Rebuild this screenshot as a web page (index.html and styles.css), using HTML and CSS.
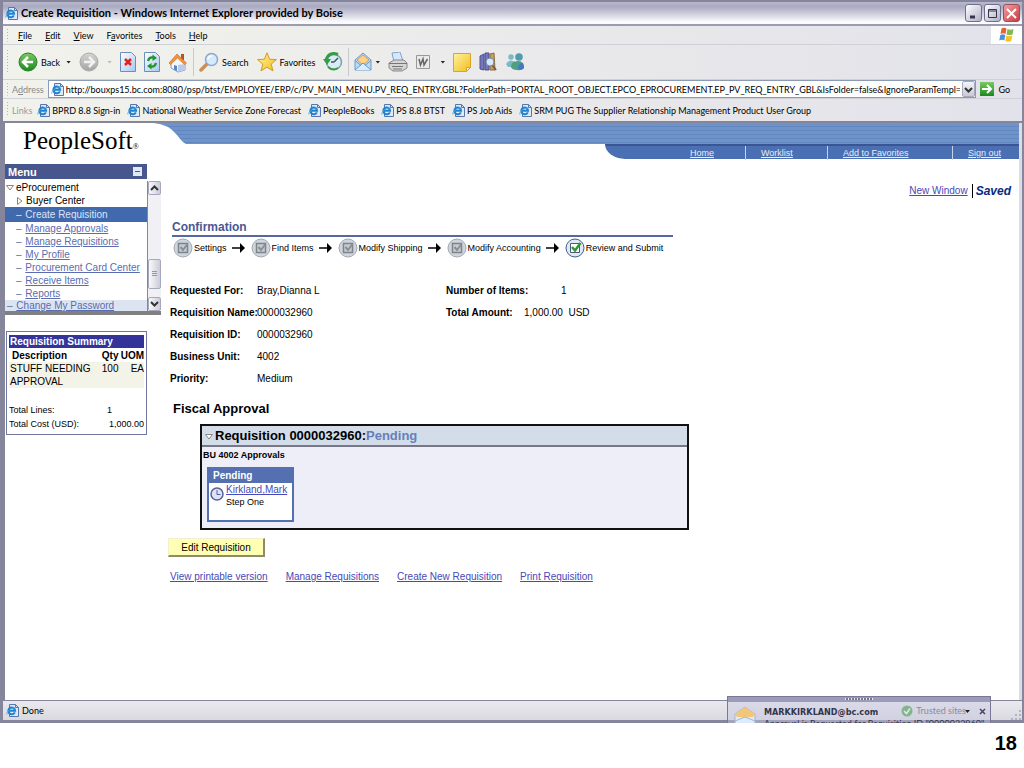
FILE: index.html
```html
<!DOCTYPE html>
<html lang="en">
<head>
  <meta charset="utf-8">
  <title>Create Requisition</title>
  <link rel="stylesheet" href="styles.css">
</head>
<body>

  <!-- shared icons -->
  <svg class="defs" width="0" height="0" aria-hidden="true">
    <linearGradient id="g-green" x1="0" y1="0" x2="0" y2="1"><stop offset="0" stop-color="#7cc963"/><stop offset="1" stop-color="#198a1c"/></linearGradient>
    <linearGradient id="g-gray" x1="0" y1="0" x2="0" y2="1"><stop offset="0" stop-color="#d4d4d4"/><stop offset="1" stop-color="#a4a4a4"/></linearGradient>
    <linearGradient id="g-page" x1="0" y1="0" x2="1" y2="1"><stop offset="0" stop-color="#fff"/><stop offset="1" stop-color="#a8c6f2"/></linearGradient>
    <linearGradient id="g-gold" x1="0" y1="0" x2="1" y2="1"><stop offset="0" stop-color="#fff3a0"/><stop offset="1" stop-color="#f2bd1c"/></linearGradient>
    <symbol id="ie" viewBox="0 0 13 13">
      <path d="M3.500 .5h6l3 3v9h-9z" fill="#dfe9f8" stroke="#5877ad"/>
      <path d="M9.500 .5v3h3" fill="none" stroke="#5877ad"/>
      <path d="M8.800 8.300a3.400 3.400 0 1 1 .3-1.500H2.800" fill="none" stroke="#1f82cf" stroke-width="2"/>
      <path d="M1 10.500C-.5 8.500 6 3 9.500 4" fill="none" stroke="#4aa7e4" stroke-width=".9"/>
    </symbol>
    <symbol id="step" viewBox="0 0 20 20">
      <circle cx="10" cy="10" r="9" fill="#cfd5dc" stroke="#a3a9b1"/>
      <path d="M5.500 5.500h9v9h-9z" fill="#c9cccf" stroke="#7e848b" stroke-width="1.500"/>
      <path d="M7.500 9l2.500 3 4.500-6" fill="none" stroke="#898f96" stroke-width="2"/>
    </symbol>
    <symbol id="arrow" viewBox="0 0 14 10">
      <path d="M0 5h8" stroke="#000" stroke-width="1.500"/>
      <path d="M8 0l5 5-5 5z"/>
    </symbol>
  </svg>

  <div class="window">
    <header class="titlebar">
      <svg class="ie" width="13" height="13"><use href="#ie"/></svg>
      <h1>Create Requisition - Windows Internet Explorer provided by Boise</h1>
      <div class="winbuttons">
        <button class="winbtn" aria-label="Minimize"><svg width="15" height="15"><path d="M4 11h5" stroke="#33354d" stroke-width="3"/></svg></button>
        <button class="winbtn" aria-label="Maximize"><svg width="15" height="15"><path d="M3.500 3.500h8v8h-8zM3 5h9" fill="none" stroke="#33354d"/></svg></button>
        <button class="winbtn close" aria-label="Close"><svg width="15" height="15"><path d="M3 3l9 9M12 3l-9 9" stroke="#fff" stroke-width="2"/></svg></button>
      </div>
    </header>

    <div class="menubar bar">
      <button><u>F</u>ile</button>
      <button><u>E</u>dit</button>
      <button><u>V</u>iew</button>
      <button>F<u>a</u>vorites</button>
      <button><u>T</u>ools</button>
      <button><u>H</u>elp</button>
      <div class="flag">
        <svg width="18" height="16" viewBox="0 0 18 16">
          <path d="M3.500 1.500Q6 0 8.500 1.500L7.500 7Q5 5.500 2.500 7z" fill="#ea6035"/>
          <path d="M9.500 2Q12 3.500 15.500 2L14.500 7.500Q11 9 8.500 7.500z" fill="#86b84a"/>
          <path d="M2.300 8Q5 6.500 7.300 8L6.300 13.500Q4 12 1.300 13.500z" fill="#4c8fdb"/>
          <path d="M8.300 8.500Q11 10 14.300 8.500L13.300 14Q10 15.500 7.300 14z" fill="#f6c12e"/>
        </svg>
      </div>
    </div>

    <div class="toolbar bar">
      <button class="back">
        <svg width="20" height="20"><circle cx="10" cy="10" r="9" fill="url(#g-green)" stroke="#2b7f2a"/><path d="M10 5l-5 5 5 5M5.500 10H15" fill="none" stroke="#fff" stroke-width="2.500"/></svg>
        Back <span class="drop"></span>
      </button>
      <button class="forward" aria-label="Forward">
        <svg width="20" height="20"><circle cx="10" cy="10" r="9" fill="url(#g-gray)" stroke="#aaa"/><path d="M10 5l5 5-5 5M14.500 10H5" fill="none" stroke="#f1f1f1" stroke-width="2.500"/></svg>
        <span class="drop faint"></span>
      </button>
      <button aria-label="Stop">
        <svg width="16" height="20"><path d="M.5 .5h11l4 4v15H.5z" fill="url(#g-page)" stroke="#6d8dc0"/><path d="M5 7l6 6M11 7l-6 6" stroke="#e2231a" stroke-width="2.500"/></svg>
      </button>
      <button aria-label="Refresh">
        <svg width="16" height="20"><path d="M.5 .5h11l4 4v15H.5z" fill="url(#g-page)" stroke="#6d8dc0"/><path d="M4 9q1-4 5-3.500M12 11q-1 4-5 3.500" fill="none" stroke="#22962b" stroke-width="2.300"/><path d="M8.500 2.500L13 6l-4.500 3zM7.500 17.500L3 14l4.500-3z" fill="#22962b"/></svg>
      </button>
      <button aria-label="Home">
        <svg width="20" height="21"><path d="M13 2h3v6h-3z" fill="#b5522c"/><path d="M3 10l6-6 8 8v6l-7 2-7-4z" fill="#f3f6fb" stroke="#8b9ab8"/><path d="M10 13l7-1v6l-7 2z" fill="#b8cbe8"/><path d="M9 2L1 11l1.500 1.500L9.500 6l7 6.500 2-1.500z" fill="#f0953b" stroke="#c76920" stroke-width=".6"/><path d="M6 13l3 1v5l-3-1.500z" fill="#5785c5"/></svg>
      </button>
      <span class="sep"></span>
      <button class="search">
        <svg width="20" height="20"><path d="M2 18l7-7" stroke="#c98f55" stroke-width="3.500" stroke-linecap="round"/><circle cx="12.500" cy="7.500" r="6" fill="#d5eafa" stroke="#8ba9cf" stroke-width="1.500"/><path d="M9 7q1-3 4-3" fill="none" stroke="#fff" stroke-width="1.500"/></svg>
        Search
      </button>
      <button class="favs">
        <svg width="20" height="20"><path d="M10 .8l2.600 6.400 6.800.4-5.200 4.500 1.800 6.800L10 15.200 4 18.900l1.800-6.800L.6 7.600l6.800-.4z" fill="url(#g-gold)" stroke="#d29a25"/></svg>
        Favorites
      </button>
      <button aria-label="History">
        <svg width="20" height="20"><circle cx="11" cy="10" r="7.500" fill="#d8ecf6" stroke="#7da2a9" stroke-width="1.500"/><path d="M11 10l4-4M11 10h-3" stroke="#42545c" stroke-width="1.500"/><path d="M15 2.500Q6-1 3 8" fill="none" stroke="#349d43" stroke-width="3"/><path d="M0 7h8l-4 6z" fill="#349d43"/><path d="M5 15q5 4.500 10 1" fill="none" stroke="#349d43" stroke-width="2"/></svg>
      </button>
      <span class="sep"></span>
      <button class="mail" aria-label="Mail">
        <svg width="18" height="20"><path d="M1 8l8-7 8 7v10H1z" fill="#b9dbf7" stroke="#6c9ac9"/><path d="M3 8l6-5 6 5-6 5z" fill="#fbd38b" stroke="#db9d49"/><path d="M1 18l8-7 8 7M1 8.500l6 5M17 8.500l-6 5" fill="#d9edfc" stroke="#6c9ac9"/></svg>
        <span class="drop"></span>
      </button>
      <button aria-label="Print">
        <svg width="20" height="20"><path d="M4 1l8-1 3 9-9 1z" fill="#d6e8fb" stroke="#7fa4cf"/><path d="M1 11l5-3h10l3 3v5l-5 3H5l-4-3z" fill="#d5d5d8" stroke="#888"/><path d="M1 11.500h18M4 14.500h11M5 17h9" stroke="#777"/></svg>
      </button>
      <button class="word" aria-label="Edit with Word">
        <svg width="14" height="14"><path d="M.5 .5h13v13H.5z" fill="#e9e9e9" stroke="#999"/><path d="M3 4l1.500 6L7 4l1 6 3.500-6" fill="none" stroke="#666" stroke-width="1.500"/></svg>
        <span class="drop"></span>
      </button>
      <button aria-label="Notes">
        <svg width="18" height="19"><path d="M.5 .5h17v14l-4 4H.5z" fill="url(#g-gold)" stroke="#d9a62b"/><path d="M17.500 14.500h-4v4z" fill="#fff3b0" stroke="#d9a62b"/></svg>
      </button>
      <button aria-label="Research">
        <svg width="18" height="20"><path d="M1 4l4-2v16l-4-1zM6 1h4v17H6z" fill="#7577b8" stroke="#4d4f91"/><path d="M11 2l4-1 1 17h-5z" fill="#c8a05f" stroke="#8c6b38"/><path d="M13 13l4 5" stroke="#7a5b39" stroke-width="2"/><circle cx="11" cy="10" r="4" fill="#d5e9f7" stroke="#6f8cb1"/></svg>
      </button>
      <button aria-label="Messenger">
        <svg width="20" height="20"><circle cx="6" cy="5" r="2.800" fill="#79bbc4"/><path d="M1 12q4-6 9-2v5H3z" fill="#79bbc4"/><circle cx="14" cy="5" r="3.800" fill="#4e9daf"/><path d="M6 15q0-6 7-6 5 0 6 5v2q-3 3-7 2-5 0-6-3z" fill="#4f9f82"/><path d="M13 17q0-6 5-6l1 5q-2 3-6 1z" fill="#4678bd"/></svg>
      </button>
    </div>

    <form class="addressbar bar">
      <label for="address">A<u>d</u>dress</label>
      <div class="combo">
        <svg class="ie" width="13" height="13"><use href="#ie"/></svg>
        <input id="address" type="text" value="http://bouxps15.bc.com:8080/psp/btst/EMPLOYEE/ERP/c/PV_MAIN_MENU.PV_REQ_ENTRY.GBL?FolderPath=PORTAL_ROOT_OBJECT.EPCO_EPROCUREMENT.EP_PV_REQ_ENTRY_GBL&amp;IsFolder=false&amp;IgnoreParamTempl=FolderPath">
        <button type="button" class="combo-btn" aria-label="Show addresses"><svg width="9" height="6"><path d="M1 1l3.500 3.500L8 1" fill="none" stroke="#333" stroke-width="2"/></svg></button>
      </div>
      <button type="button" class="go">
        <svg width="14" height="14"><path d="M0 0h14v14H0z" fill="url(#g-green)"/><path d="M2 7h9M7 3l4 4-4 4" fill="none" stroke="#fff" stroke-width="2"/></svg>
        Go
      </button>
    </form>

    <nav class="linksbar bar">
      <span>Links</span>
      <a href="#"><svg class="ie" width="13" height="13"><use href="#ie"/></svg>BPRD 8.8 Sign-in</a>
      <a href="#"><svg class="ie" width="13" height="13"><use href="#ie"/></svg>National Weather Service Zone Forecast</a>
      <a href="#"><svg class="ie" width="13" height="13"><use href="#ie"/></svg>PeopleBooks</a>
      <a href="#"><svg class="ie" width="13" height="13"><use href="#ie"/></svg>PS 8.8 BTST</a>
      <a href="#"><svg class="ie" width="13" height="13"><use href="#ie"/></svg>PS Job Aids</a>
      <a href="#"><svg class="ie" width="13" height="13"><use href="#ie"/></svg>SRM PUG The Supplier Relationship Management Product User Group</a>
    </nav>

    <div class="page">
      <div class="banner">
        <div class="logo">PeopleSoft<small>®</small></div>
        <div class="stripes">
          <svg class="swoosh" width="32" height="21"><path d="M0 0q14 1 23 12 5 7 9 9H0z" fill="#fff"/></svg>
          <nav class="topnav">
            <a href="#">Home</a>
            <a href="#">Worklist</a>
            <a href="#">Add to Favorites</a>
            <a href="#">Sign out</a>
          </nav>
        </div>
      </div>

      <div class="columns">
        <aside class="sidebar">
          <div class="menu-head">Menu <button aria-label="Collapse menu"></button></div>
          <div class="menu-box">
            <ul class="tree">
              <li class="top"><svg width="8" height="6"><path d="M.5 .5h7L4 5z" fill="#fff" stroke="#8a8a70"/></svg>eProcurement</li>
              <li class="folder"><svg width="6" height="8"><path d="M.5 .5v7L5 4z" fill="#fff" stroke="#8a8a70"/></svg>Buyer Center</li>
              <li class="current">– <a href="#">Create Requisition</a></li>
              <li>– <a href="#">Manage Approvals</a></li>
              <li>– <a href="#">Manage Requisitions</a></li>
              <li>– <a href="#">My Profile</a></li>
              <li>– <a href="#">Procurement Card Center</a></li>
              <li>– <a href="#">Receive Items</a></li>
              <li>– <a href="#">Reports</a></li>
              <li class="root">– <a href="#">Change My Password</a></li>
            </ul>
            <div class="scroll">
              <button aria-label="Scroll up"><svg width="9" height="6"><path d="M1 5l3.500-3.500L8 5" fill="none" stroke="#333" stroke-width="2"/></svg></button>
              <div class="thumb"></div>
              <button aria-label="Scroll down"><svg width="9" height="6"><path d="M1 1l3.500 3.500L8 1" fill="none" stroke="#333" stroke-width="2"/></svg></button>
            </div>
          </div>

          <div class="summary">
            <h2>Requisition Summary</h2>
            <table>
              <tr><th>Description</th><th>Qty</th><th>UOM</th></tr>
              <tr class="item"><td>STUFF NEEDING APPROVAL</td><td>100</td><td>EA</td></tr>
            </table>
            <dl>
              <dt>Total Lines:</dt><dd class="lines">1</dd>
              <dt>Total Cost (USD):</dt><dd>1,000.00</dd>
            </dl>
          </div>
        </aside>

        <main>
          <div class="pagebar"><a href="#">New Window</a><em>Saved</em></div>

          <h2 class="section">Confirmation</h2>
          <ol class="steps">
            <li><svg width="20" height="20"><use href="#step"/></svg>Settings</li>
            <li><svg class="arrow" width="14" height="10"><use href="#arrow"/></svg><svg width="20" height="20"><use href="#step"/></svg>Find Items</li>
            <li><svg class="arrow" width="14" height="10"><use href="#arrow"/></svg><svg width="20" height="20"><use href="#step"/></svg>Modify Shipping</li>
            <li><svg class="arrow" width="14" height="10"><use href="#arrow"/></svg><svg width="20" height="20"><use href="#step"/></svg>Modify Accounting</li>
            <li><svg class="arrow" width="14" height="10"><use href="#arrow"/></svg><svg width="20" height="20"><circle cx="10" cy="10" r="9" fill="#dfe9f4" stroke="#3f5f8f"/><path d="M5.500 5.500h9v9h-9z" fill="#fff" stroke="#557"/><path d="M7 9l3 3.500L15.500 5" fill="none" stroke="#2d9a35" stroke-width="2.500"/></svg>Review and Submit</li>
          </ol>

          <div class="details">
            <dl class="fields">
              <dt>Requested For:</dt><dd>Bray,Dianna L</dd>
              <dt>Requisition Name:</dt><dd>0000032960</dd>
              <dt>Requisition ID:</dt><dd>0000032960</dd>
              <dt>Business Unit:</dt><dd>4002</dd>
              <dt>Priority:</dt><dd>Medium</dd>
            </dl>
            <dl class="fields totals">
              <dt>Number of Items:</dt><dd class="count">1</dd>
              <dt>Total Amount:</dt><dd>1,000.00&nbsp; USD</dd>
            </dl>
          </div>

          <h2 class="fiscal">Fiscal Approval</h2>
          <section class="approval">
            <h3><svg width="8" height="6"><path d="M.5 .5h7L4 5z" fill="#fff" stroke="#888"/></svg>Requisition 0000032960:<span>Pending</span></h3>
            <h4>BU 4002 Approvals</h4>
            <div class="card">
              <h5>Pending</h5>
              <div class="approver">
                <svg width="14" height="14"><circle cx="7" cy="7" r="6" fill="#dfe3f4" stroke="#56609c" stroke-width="1.500"/><path d="M7 3v4.500h3.500" fill="none" stroke="#56609c"/></svg>
                <p><a href="#">Kirkland,Mark</a><br>Step One</p>
              </div>
            </div>
          </section>

          <button class="edit">Edit Requisition</button>

          <div class="actions">
            <a href="#">View printable version</a>
            <a href="#">Manage Requisitions</a>
            <a href="#">Create New Requisition</a>
            <a href="#">Print Requisition</a>
          </div>
        </main>
      </div>
    </div>

    <footer class="statusbar">
      <svg class="ie" width="13" height="13"><use href="#ie"/></svg>
      <span>Done</span>
      <span class="zone"><svg width="12" height="12"><circle cx="6" cy="6" r="5.500" fill="#4aa648"/><path d="M3 6l2.500 2.500L9 3.500" fill="none" stroke="#fff" stroke-width="1.500"/></svg>Trusted sites</span>
      <svg class="grip" width="10" height="10"><path d="M8 0h2v2H8zM8 4h2v2H8zM4 4h2v2H4zM8 8h2v2H8zM4 8h2v2H4zM0 8h2v2H0z" fill="#b4b4c0"/></svg>
    </footer>

    <!-- mail alert sliding up over the status bar -->
    <div class="toast">
      <div class="toast-grip"></div>
      <svg width="22" height="22"><path d="M1 8l10-7 10 7v14H1z" fill="#dcecfa" stroke="#a3b5cf"/><path d="M1 8l10-7 10 7-2 3H3z" fill="#f4c778"/><path d="M1 15l10-4 10 4" fill="none" stroke="#9fb6d6"/></svg>
      <div class="toast-text"><b>MARKKIRKLAND@bc.com</b><br>Approval is Requested for Requisition ID "0000032960"</div>
      <span class="drop"></span>
      <button aria-label="Close alert"><svg width="7" height="7"><path d="M1 1l5 5M6 1L1 6" stroke="#44465c" stroke-width="1.500"/></svg></button>
    </div>
  </div>

  <div class="slide-number">18</div>

</body>
</html>
```
FILE: styles.css
```css
* { box-sizing: border-box; }

body {
  margin: 0;
  min-height: 100vh;
  display: flex;
  flex-direction: column;
  background: #fff;
  color: #000;
  font-family: "Liberation Sans", Arial, sans-serif;
  font-size: 10px;
}

h1, h2, h3, h4, h5, p, ul, ol, dl, dd { margin: 0; padding: 0; }
ul, ol { list-style: none; }
svg { flex: none; }
a { color: #4848b8; }
.defs { position: absolute; }

button {
  padding: 0;
  border: 0;
  background: none;
  font: inherit;
  color: inherit;
}

/* browser window */
.window {
  position: relative;
  flex: 1;
  display: flex;
  flex-direction: column;
  border: 2px solid #85859c;
  border-width: 2px 2px 3px 3px;
  font-family: Lato, "Liberation Sans", sans-serif;
  font-size: 9px;
  font-variant-ligatures: none;
}

.titlebar {
  display: flex;
  align-items: center;
  gap: 3px;
  height: 24px;
  padding: 0 2px;
  background: linear-gradient(#b9b9cd, #a9a9c1 20%, #d5d5e2 60%, #fbfbfd 90%);
  border-bottom: 2px solid #9c9cb0;
}

.titlebar h1 { font-size: 11px; line-height: 16px; white-space: nowrap; }

.winbuttons { display: flex; gap: 2px; margin-left: auto; }

.winbtn {
  width: 17px;
  height: 18px;
  border: 1px solid #70708e;
  border-radius: 3px;
  background: linear-gradient(135deg, #fff, #b0b0c8);
}

.winbtn.close { background: linear-gradient(135deg, #f0a0a0, #c83c44); border-color: #a04c5a; }
.winbtn svg { display: block; }

.bar {
  display: flex;
  align-items: center;
  padding-left: 15px;
  background:
    repeating-linear-gradient(#b4b4b4 0 1px, transparent 1px 3px) 4px center / 1px 70% no-repeat,
    linear-gradient(90deg, #f2f2ec, #e2e2ea);
  border-bottom: 1px solid #d0d0d8;
  white-space: nowrap;
}

.menubar { height: 19px; gap: 13px; }

.flag {
  align-self: stretch;
  display: flex;
  align-items: center;
  justify-content: center;
  width: 31px;
  margin-left: auto;
  background: #fff;
}

.toolbar { height: 35px; gap: 8px; }
.toolbar button { display: flex; align-items: center; gap: 3px; }
.toolbar .forward { gap: 8px; }
.toolbar .mail { gap: 0; }
.toolbar .word { gap: 7px; }
.sep { width: 1px; height: 28px; margin: 0 -3px; background: #c8c8cc; }

.drop {
  width: 5px;
  height: 3px;
  margin-left: 3px;
  background: #222;
  clip-path: polygon(0 0, 100% 0, 50% 100%);
}

.drop.faint { margin: 0; background: #bbb; }

.addressbar { height: 19px; padding: 0 12px 0 9px; gap: 4px; }
.addressbar label { color: #888; }

.combo {
  flex: 1;
  display: flex;
  align-items: center;
  gap: 2px;
  height: 18px;
  min-width: 0;
  padding-left: 2px;
  background: #fff;
  border: 1px solid #8b9bb3;
}

.combo input {
  flex: 1;
  min-width: 0;
  height: 16px;
  padding: 0;
  border: 0;
  background: none;
  font: inherit;
}

.combo-btn {
  width: 13px;
  height: 16px;
  border: 1px solid #a8a8bc;
  border-radius: 2px;
  background: linear-gradient(#f4f4fa, #c8c8d8);
}

.go { display: flex; align-items: center; gap: 4px; }

.linksbar { height: 24px; padding-left: 9px; gap: 7px; border-bottom: 2px solid #85859c; }
.linksbar span { color: #999; margin-right: -2px; }
.linksbar a { display: flex; align-items: center; gap: 2px; color: #000; text-decoration: none; }

/* PeopleSoft page */
.page {
  flex: 1;
  font-family: "Liberation Sans", Arial, sans-serif;
  font-size: 10px;
  background: #fff;
  border: solid;
  border-width: 0 3px 0 2px;
  border-color: #dcdce6 #dcdce6 #dcdce6 #85859c;
}

.banner { display: flex; align-items: flex-start; height: 41px; }

.logo {
  width: 149px;
  padding-left: 18px;
  font-family: "Liberation Serif", "Times New Roman", serif;
  font-size: 25px;
  line-height: 36px;
}

.logo small { font-size: 8px; }
.swoosh { display: block; }

.stripes {
  flex: 1;
  height: 21px;
  background: repeating-linear-gradient(#6e93cb 0 3px, #6286be 3px 4px);
}

.topnav {
  display: grid;
  grid-template-columns: 140px 82px 125px 67px;
  width: 414px;
  height: 15px;
  margin-left: auto;
  background: linear-gradient(#3b5594 0 2px, #4a70b3 2px);
  border-bottom-left-radius: 20px 15px;
  font-size: 9px;
}

.topnav a {
  margin-top: 2px;
  padding-left: 15px;
  color: #e6edf8;
  line-height: 14px;
  border-left: 1px solid #c4d2ea;
}

.topnav a:first-child { padding-left: 85px; border: 0; }

.columns { display: flex; align-items: flex-start; }

.sidebar { width: 156px; flex: none; }

.menu-head {
  display: flex;
  align-items: center;
  justify-content: space-between;
  width: 142px;
  height: 15px;
  padding: 0 5px 0 3px;
  background: #47568c;
  color: #fff;
  font-size: 11px;
  font-weight: bold;
}

.menu-head button {
  width: 9px;
  height: 9px;
  background: linear-gradient(#47568c, #47568c) center / 5px 1px no-repeat #dfe7f5;
}

.menu-box {
  display: flex;
  height: 136px;
  padding-top: 2px;
  border-bottom: 4px solid #808080;
}

.tree { flex: 1; color: #5c6f9f; white-space: nowrap; }
.tree li { padding-left: 11px; line-height: 13px; }
.tree a { margin-left: 1px; color: #5a6db0; }
.tree .top, .tree .folder { color: #000; }
.tree .top { padding-left: 1px; }
.tree .top svg { margin-right: 2px; }
.tree .folder svg { margin: 0 3px -1px 1px; }
.tree .current { background: #4169ae; color: #dbe6f7; line-height: 15px; }
.tree .current a { color: #dbe6f7; text-decoration: none; }
.tree .root { padding-left: 2px; background: #dce4f1; line-height: 11px; }

.scroll {
  display: flex;
  flex-direction: column;
  width: 14px;
  border-left: 1px solid #888;
  background: #f1f1f5;
}

.scroll button, .thumb {
  height: 14px;
  border: 1px solid #a8a8bc;
  border-radius: 2px;
  background: linear-gradient(90deg, #f8f8fc, #ccccda);
}

.scroll button { display: flex; align-items: center; justify-content: center; }
.scroll .thumb {
  height: 30px;
  margin: auto 0 8px;
  background: repeating-linear-gradient(#999 0 1px, transparent 1px 2px) center / 5px 6px no-repeat, linear-gradient(90deg, #f8f8fc, #ccccda);
}

.summary {
  width: 141px;
  margin: 16px 0 0 1px;
  padding: 3px 2px;
  border: 1px solid #7078a0;
}

.summary h2 {
  padding-left: 1px;
  background: #333399;
  color: #fff;
  font-size: 10px;
  line-height: 13px;
}

.summary table { width: 100%; table-layout: fixed; border-collapse: collapse; }
.summary th, .summary td { padding: 0; line-height: 13px; text-align: right; vertical-align: top; }
.summary th { padding-top: 1px; }
.summary th:first-child { width: 84px; padding-left: 3px; }
.summary th:first-child, .summary td:first-child { text-align: left; }
.summary td:first-child { padding-left: 1px; }
.summary .item { background: #f3f3e7; }
.summary dl {
  display: grid;
  grid-template-columns: auto auto;
  justify-content: space-between;
  margin-top: 15px;
  font-size: 9px;
  line-height: 14px;
}
.summary dd { text-align: right; }
.summary .lines { padding-right: 32px; }

main { flex: 1; padding: 20px 8px 0 9px; }

.pagebar { display: flex; justify-content: flex-end; align-items: center; line-height: 14px; }
.pagebar em { margin-left: 4px; padding-left: 3px; border-left: 1px solid #000; color: #0a2a80; font-size: 12px; font-weight: bold; }

.section {
  width: 501px;
  margin: 22px 0 0 2px;
  border-bottom: 2px solid #56689f;
  color: #4a5892;
  font-size: 12px;
  line-height: 15px;
}

.steps { display: flex; gap: 5px; margin: 1px 0 0 3px; font-size: 9px; white-space: nowrap; }
.steps li { display: flex; align-items: center; gap: 1px; }
.steps .arrow { margin-right: 4px; }

.details { display: flex; margin-top: 22px; }
.fields {
  display: grid;
  grid-template-columns: 87px auto;
  align-content: start;
  width: 276px;
  line-height: 22px;
}
.fields dt { font-weight: bold; white-space: nowrap; }
.fields.totals { grid-template-columns: 78px auto; }
.fields .count { padding-left: 37px; }

.fiscal { margin: 11px 0 0 3px; font-size: 13px; line-height: 16px; }

.approval {
  width: 489px;
  height: 106px;
  margin: 7px 0 0 30px;
  border: 2px solid #111;
  background: #eeeef8;
}

.approval h3 {
  padding-left: 3px;
  background: #d3dde9;
  border-bottom: 2px solid #778;
  font-size: 13px;
  line-height: 19px;
}

.approval h3 svg { margin-right: 2px; }
.approval h3 span { color: #6680bb; }
.approval h4 { padding-left: 1px; font-size: 9px; line-height: 17px; }

.card {
  width: 87px;
  height: 55px;
  margin: 3px 0 0 5px;
  border: 2px solid #5570b0;
  background: #fff;
}

.card h5 { padding-left: 4px; background: #5570b0; color: #fff; font-size: 10px; line-height: 14px; }
.approver { display: flex; gap: 2px; padding: 1px; font-size: 9px; line-height: 12px; }
.approver svg { margin-top: 3px; }
.approver a { font-size: 10px; }

.edit {
  display: block;
  width: 97px;
  height: 19px;
  margin: 8px 0 0 -2px;
  border: solid;
  border-width: 1px 2px 2px 1px;
  border-color: #f3efcf #8e8c66 #8e8c66 #f3efcf;
  background: #ffffb4;
}

.actions { display: flex; gap: 18px; margin-top: 14px; }

.statusbar {
  display: flex;
  align-items: center;
  gap: 3px;
  height: 20px;
  padding: 0 1px 0 3px;
  background: linear-gradient(#e9e9ee, #d9d9e0);
  border-top: 1px solid #85859c;
}

.zone { display: flex; align-items: center; gap: 3px; margin-left: auto; margin-right: 42px; color: #555; }
.grip { align-self: flex-end; }

.toast {
  position: absolute;
  right: 31px;
  bottom: -3px;
  display: flex;
  align-items: flex-start;
  width: 264px;
  height: 27px;
  padding: 9px 4px 0 6px;
  overflow: hidden;
  border: 1px solid #77779a;
  border-bottom: 0;
  background: rgba(200, 200, 226, .45);
  color: #33354a;
  line-height: 11px;
  white-space: nowrap;
}

.toast-grip {
  position: absolute;
  inset: 0 0 auto;
  height: 5px;
  background: repeating-linear-gradient(90deg, #eee 0 1px, #778 1px 3px) center 1px / 28px 2px no-repeat, #9c9cb9;
}

.toast-text { flex: 1; width: 0; margin-left: 8px; }
.toast-text b { font-family: "DejaVu Sans Condensed", "DejaVu Sans", sans-serif; }
.toast .drop { margin: 4px 9px 0 0; }

.slide-number {
  height: 45px;
  padding-right: 7px;
  font-size: 20px;
  font-weight: bold;
  line-height: 40px;
  text-align: right;
}
```
